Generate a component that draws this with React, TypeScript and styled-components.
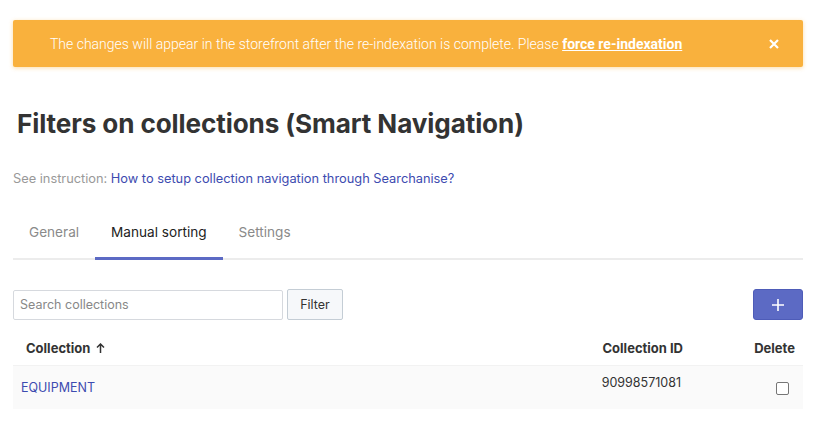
import * as React from "react";
import styled, { createGlobalStyle } from "styled-components";

const GlobalStyle = createGlobalStyle`
  body {
    margin: 0;
    background: #fff;
    font-family: Inter, "Liberation Sans", sans-serif;
    color: #212b36;
  }
`;

const Page = styled.div`
  padding: 20px 18px 0 13px;
`;

const Banner = styled.div`
  display: flex;
  align-items: center;
  height: 47px;
  padding: 0 24px 0 37px;
  background: #f9b13d;
  border-radius: 2px;
  box-shadow: 0 1px 4px rgba(249, 177, 61, 0.45);
  font-family: Roboto, "Liberation Sans", sans-serif;
  font-size: 14px;
  color: #fff;
`;

const BannerText = styled.div`
  flex: 1;
  font-weight: 300;
`;

const BannerLink = styled.a`
  color: #fff;
  font-weight: 700;
  text-decoration: underline;
`;

const Close = styled.button`
  border: 0;
  background: none;
  padding: 0;
  color: #fff;
  display: flex;
  cursor: pointer;
`;

const Title = styled.h1`
  margin: 41px 0 0 4px;
  font-size: 26.1px;
  font-weight: 700;
  color: #333;
  letter-spacing: -0.1px;
`;

const Instruction = styled.p`
  margin: 32px 0 0;
  font-size: 12.8px;
  color: #999;
`;

const InstructionLink = styled.a`
  color: #3d4bb0;
  text-decoration: none;
`;

const Tabs = styled.div`
  display: flex;
  margin-top: 20px;
  border-bottom: 2px solid #ececec;
`;

const Tab = styled.div<{ $active?: boolean }>`
  padding: 18px 16px 17px;
  font-size: 13.6px;
  color: ${(p) => (p.$active ? "#222" : "#8a8a8a")};
  margin-bottom: -2px;
  border-bottom: 3px solid ${(p) => (p.$active ? "#5c6ac4" : "transparent")};
`;

const Toolbar = styled.div`
  display: flex;
  align-items: center;
  gap: 4px;
  margin-top: 29px;
`;

const SearchInput = styled.input`
  width: 270px;
  height: 30px;
  box-sizing: border-box;
  border: 1px solid #d6d9de;
  border-radius: 2px;
  padding: 0 6px;
  font-family: inherit;
  font-size: 12.5px;
  &::placeholder {
    color: #888;
  }
`;

const FilterButton = styled.button`
  height: 31px;
  width: 56px;
  border: 1px solid #c4cdd5;
  border-radius: 2px;
  background: #f6f8fa;
  font-family: inherit;
  font-size: 12.5px;
  color: #333;
`;

const AddButton = styled.button`
  margin-left: auto;
  width: 50px;
  height: 31px;
  border: 1px solid #4e5cb8;
  border-radius: 3px;
  background: #5c6ac4;
  color: #fff;
  display: flex;
  align-items: center;
  justify-content: center;
  padding: 0;
`;

const Table = styled.div`
  margin-top: 11px;
`;

const Row = styled.div<{ $head?: boolean }>`
  display: grid;
  grid-template-columns: 1fr 200px 90px;
  align-items: center;
  height: ${(p) => (p.$head ? "34px" : "43px")};
  background: ${(p) => (p.$head ? "#fff" : "#fafafa")};
  border-top: ${(p) => (p.$head ? "none" : "1px solid #f2f2f2")};
  font-size: ${(p) => (p.$head ? "13px" : "12.5px")};
  font-weight: ${(p) => (p.$head ? 700 : 400)};
  color: #333;
`;

const Cell = styled.div<{ $align?: string; $padLeft?: number; $padRight?: number }>`
  padding: 0 ${(p) => p.$padRight ?? 8}px 0 ${(p) => p.$padLeft ?? 13}px;
  text-align: ${(p) => p.$align || "left"};
`;

const IdCell = styled(Cell)`
  align-self: start;
  padding-top: 9px;
`;

const ItemLink = styled.a`
  color: #3d4bb0;
  text-decoration: none;
`;

const Check = styled.span`
  display: inline-block;
  width: 11px;
  height: 11px;
  border: 1px solid #767676;
  border-radius: 2px;
  background: #fff;
  margin-right: 6px;
  vertical-align: middle;
`;

export default function App() {
  return (
    <>
      <GlobalStyle />
      <Page>
        <Banner>
          <BannerText>
            The changes will appear in the storefront after the re-indexation is complete. Please{" "}
            <BannerLink href="#">force re-indexation</BannerLink>
          </BannerText>
          <Close>
            <svg width="10" height="10" viewBox="0 0 10 10">
              <path d="M1 1L9 9M9 1L1 9" stroke="#fff" strokeWidth="2.2" />
            </svg>
          </Close>
        </Banner>
        <Title>Filters on collections (Smart Navigation)</Title>
        <Instruction>
          See instruction:{" "}
          <InstructionLink href="#">How to setup collection navigation through Searchanise?</InstructionLink>
        </Instruction>
        <Tabs>
          <Tab>General</Tab>
          <Tab $active>Manual sorting</Tab>
          <Tab>Settings</Tab>
        </Tabs>
        <Toolbar>
          <SearchInput placeholder="Search collections" />
          <FilterButton>Filter</FilterButton>
          <AddButton>
            <svg width="14" height="14" viewBox="0 0 14 14">
              <path d="M7 1V13M1 7H13" stroke="#fff" strokeWidth="1.6" />
            </svg>
          </AddButton>
        </Toolbar>
        <Table>
          <Row $head>
            <Cell>
              Collection{" "}
              <svg width="9" height="10" viewBox="0 0 9 10" style={{ marginLeft: 3 }}>
                <path d="M4.5 10V1.5M1 4.5L4.5 1L8 4.5" stroke="#333" strokeWidth="1.5" fill="none" />
              </svg>
            </Cell>
            <Cell $align="right" $padRight={30}>Collection ID</Cell>
            <Cell $align="right">Delete</Cell>
          </Row>
          <Row>
            <Cell $padLeft={8}>
              <ItemLink href="#">EQUIPMENT</ItemLink>
            </Cell>
            <IdCell $align="right" $padRight={32}>90998571081</IdCell>
            <Cell $align="right">
              <Check />
            </Cell>
          </Row>
        </Table>
      </Page>
    </>
  );
}
